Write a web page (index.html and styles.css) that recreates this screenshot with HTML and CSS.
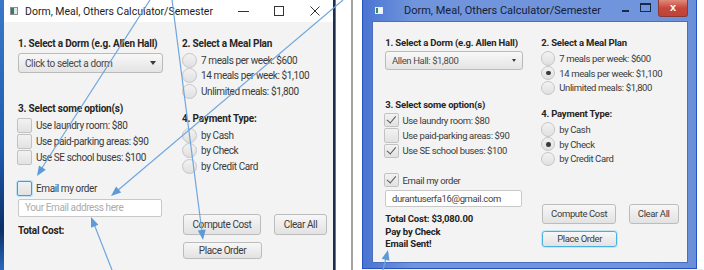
FILE: index.html
```html
<!DOCTYPE html>
<html lang="en">
<head>
    <meta charset="UTF-8">
    <meta name="viewport" content="width=device-width, initial-scale=1.0">
    <title>Dorm, Meal, Others Calculator/Semester</title>
    <link rel="stylesheet" href="styles.css">
</head>
<body>
    <div class="desk"></div>

    <!-- before: empty form -->
    <div class="win win10">
        <div class="titlebar">
            <span class="app-icon"></span>
            <span class="title">Dorm, Meal, Others Calculator/Semester</span>
            <span class="caption">
                <span class="cap-btn"><svg width="11" height="11" viewBox="0 0 11 11"><path d="M0 5.5h11" stroke="#333" stroke-width="1"/></svg></span>
                <span class="cap-btn"><svg width="10" height="10" viewBox="0 0 10 10"><rect x=".5" y=".5" width="9" height="9" fill="none" stroke="#333"/></svg></span>
                <span class="cap-btn"><svg width="10" height="10" viewBox="0 0 10 10"><path d="M.5 .5l9 9M9.5 .5l-9 9" stroke="#333" stroke-width="1"/></svg></span>
            </span>
        </div>
        <div class="pane">
            <div class="col">
                <div class="head">1. Select a Dorm (e.g. Allen Hall)</div>
                <div class="combo"><span class="prompt">Click to select a dorm</span><i class="caret"></i></div>
                <div class="head gap-options">3. Select some option(s)</div>
                <div class="check"><span class="box"></span>Use laundry room: $80</div>
                <div class="check"><span class="box"></span>Use paid-parking areas: $90</div>
                <div class="check"><span class="box"></span>Use SE school buses: $100</div>
                <div class="check email"><span class="box focused"></span>Email my order</div>
                <div class="field empty">Your Email address here</div>
                <div class="result">Total Cost:</div>
            </div>
            <div class="col">
                <div class="head">2. Select a Meal Plan</div>
                <div class="radio"><span class="ring"></span>7 meals per week: $600</div>
                <div class="radio"><span class="ring"></span>14 meals per week: $1,100</div>
                <div class="radio"><span class="ring"></span>Unlimited meals: $1,800</div>
                <div class="head gap-pay">4. Payment Type:</div>
                <div class="radio"><span class="ring"></span>by Cash</div>
                <div class="radio"><span class="ring"></span>by Check</div>
                <div class="radio"><span class="ring"></span>by Credit Card</div>
                <div class="actions">
                    <div class="btn compute">Compute Cost</div>
                    <div class="btn clear">Clear All</div>
                </div>
                <div class="btn place">Place Order</div>
            </div>
        </div>
    </div>

    <div class="between"></div>

    <!-- after: filled form -->
    <div class="win win7">
        <div class="titlebar">
            <span class="app-icon"></span>
            <span class="title">Dorm, Meal, Others Calculator/Semester</span>
            <span class="caption">
                <span class="cap-min"></span>
                <span class="cap-max"></span>
                <span class="cap-close">x</span>
            </span>
        </div>
        <div class="pane">
            <div class="col">
                <div class="head">1. Select a Dorm (e.g. Allen Hall)</div>
                <div class="combo"><span>Allen Hall: $1,800</span><i class="caret"></i></div>
                <div class="head gap-options">3. Select some option(s)</div>
                <div class="check"><span class="box on"></span>Use laundry room: $80</div>
                <div class="check"><span class="box"></span>Use paid-parking areas: $90</div>
                <div class="check"><span class="box on"></span>Use SE school buses: $100</div>
                <div class="check email"><span class="box on"></span>Email my order</div>
                <div class="field">durantuserfa16@gmail.com</div>
                <div class="result">Total Cost: $3,080.00<br>Pay by Check<br>Email Sent!</div>
            </div>
            <div class="col">
                <div class="head">2. Select a Meal Plan</div>
                <div class="radio"><span class="ring"></span>7 meals per week: $600</div>
                <div class="radio"><span class="ring on"></span>14 meals per week: $1,100</div>
                <div class="radio"><span class="ring"></span>Unlimited meals: $1,800</div>
                <div class="head gap-pay">4. Payment Type:</div>
                <div class="radio"><span class="ring"></span>by Cash</div>
                <div class="radio"><span class="ring on"></span>by Check</div>
                <div class="radio"><span class="ring"></span>by Credit Card</div>
                <div class="actions">
                    <div class="btn compute">Compute Cost</div>
                    <div class="btn clear">Clear All</div>
                </div>
                <div class="btn place focused">Place Order</div>
            </div>
        </div>
    </div>

    <div class="tail"></div>

    <!-- annotation arrows drawn over both shots -->
    <svg class="notes" width="704" height="270" viewBox="0 0 704 270">
        <g stroke="#6ea6de" stroke-width="1.2" fill="none">
            <path d="M150 0L40 171"/>
            <path d="M172 0L202 232"/>
            <path d="M343 0L117 191"/>
            <path d="M112 270L94 224"/>
            <path d="M383 270L386 258"/>
        </g>
        <g fill="#5d9ad8">
            <polygon points="37,176 45.8,169.8 39,165.4"/>
            <polygon points="203,240 197.8,230.6 205.7,229.6"/>
            <polygon points="111,196 116.1,186.5 121.2,192.6"/>
            <polygon points="91,217 98.4,224.8 91,227.8"/>
            <polygon points="388,250 389.5,260.7 381.7,258.7"/>
        </g>
    </svg>
</body>
</html>
```

FILE: styles.css
```css
body{
    margin:0;
    width:704px;
    height:270px;
    position:relative;
    display:flex;
    overflow:hidden;
    background:#eef0fa;
    font-family:Roboto,"Liberation Sans",sans-serif;
    color:#3a3a3a;
}
/* desktop edge on the left */
.desk{
    width:4px;
    background:linear-gradient(#3a78c8,#1d5bb0 55%,#0b2f66 85%,#2a68bd);
}
.win{
    display:flex;
    flex-direction:column;
}
.title{
    white-space:nowrap;
}

/* ---- windows 10 frame ---- */
.win10{
    width:329px;
    background:#f3f3f3;
    box-shadow:inset 1px 0 #8aa6c6;
}
.win10 .titlebar{
    height:22px;
    display:flex;
    align-items:center;
    padding-left:6px;
    background:#fff;
    font-size:10.5px;
    color:#1c1c1c;
}
.app-icon{
    width:6px;
    height:6px;
    border:1px solid #8d8d8d;
    background:linear-gradient(90deg,#2d7f6c 50%,#dbe6ef 50%);
}
.win10 .title{
    margin-left:7px;
}
.win10 .caption{
    margin-left:auto;
    display:flex;
}
.cap-btn{
    width:36px;
    height:22px;
    display:flex;
    align-items:center;
    justify-content:center;
}

/* gap between the two shots */
.between{
    width:29px;
    background:linear-gradient(90deg,#1e2d4e 2px,#3d80d8 2px 3px,#fff 3px 18px,#a2a2a2 18px 20px,#fff 20px);
}

/* ---- windows 7 basic frame ---- */
.win7{
    width:335px;
    height:269px;
    box-sizing:border-box;
    padding:0 8px 5px 9px;
    border:1px solid #2554c0;
    border-top:0;
    background:linear-gradient(90deg,#4a74d2,#7095dc 15%,#7095dc 85%,#6a8fd9);
}
.tail{
    width:7px;
    height:269px;
    background:#fff;
}
.win7 .titlebar{
    height:21px;
    display:flex;
    align-items:center;
    padding-left:3px;
    font-size:11px;
    color:#15203a;
}
.win7 .app-icon{
    width:6px;
    height:5px;
    border-color:#e8eef8;
    background:linear-gradient(90deg,#2f8d5f 40%,#f4f6fa 40%);
}
.win7 .title{
    margin-left:21px;
}
.win7 .caption{
    margin-left:auto;
    align-self:flex-start;
    display:flex;
    align-items:flex-start;
}
.cap-min{
    width:7px;
    height:2px;
    margin-top:10px;
    background:#1c2a4a;
}
.cap-max{
    width:9px;
    height:6px;
    margin:3px 0 0 11px;
    border:1px solid #1c2a4a;
    border-top-width:2px;
}
.cap-close{
    width:30px;
    height:17px;
    margin-left:7px;
    border:1px solid #8a3a34;
    border-top:0;
    box-sizing:border-box;
    border-radius:0 0 3px 3px;
    background:linear-gradient(#e08a7e,#c7473b 50%,#c04236);
    color:#fff;
    font:bold 11px "Liberation Sans",sans-serif;
    text-align:center;
    line-height:14px;
}

/* ---- form pane ---- */
.pane{
    flex:1;
    display:grid;
    grid-template-columns:164px 1fr;
    align-content:start;
    padding:15px 0 0 14px;
    background:#f3f3f3;
    font-size:10px;
    letter-spacing:-.4px;
    white-space:nowrap;
}
.win7 .pane{
    zoom:.95;
    border:1px solid #4b6fbd;
    padding-left:13px;
}
.col{
    display:flex;
    flex-direction:column;
    align-items:flex-start;
}
.head{
    font-weight:bold;
    letter-spacing:-.2px;
    line-height:14px;
    color:#262626;
}
.gap-options{
    margin-top:29px;
}
.gap-pay{
    margin-top:13px;
}
.combo{
    width:145px;
    height:20px;
    margin-top:2px;
    padding:0 6px;
    box-sizing:border-box;
    display:flex;
    align-items:center;
    justify-content:space-between;
    border:1px solid #bababa;
    border-radius:3px;
    background:linear-gradient(#f8f8f8,#e4e4e4);
    color:#4a4a4a;
}
.caret{
    border:3px solid transparent;
    border-top:4px solid #3a3a3a;
    border-bottom:0;
}
.check,.radio{
    display:flex;
    align-items:center;
}
.check{
    height:16px;
}
.radio{
    height:15.5px;
}
.head+.check,.head+.radio{
    margin-top:1.5px;
}
.box{
    width:13px;
    height:13px;
    margin:0 4px 0 -1px;
    border:1px solid #c2c2c2;
    border-radius:2px;
    background:linear-gradient(#f2f2f2,#e2e2e2);
    position:relative;
}
.box.focused{
    border-color:#3aa2dc;
    box-shadow:0 0 0 1px #bfe2f5;
}
.box.on:after{
    content:"";
    position:absolute;
    left:4px;
    top:0;
    width:4px;
    height:8px;
    border:solid #555;
    border-width:0 2px 2px 0;
    transform:rotate(40deg);
}
.email{
    margin-top:15px;
}
.ring{
    width:13px;
    height:13px;
    margin-right:4px;
    border:1px solid #c6c6c6;
    border-radius:50%;
    background:linear-gradient(#f2f2f2,#e0e0e0);
    display:flex;
    align-items:center;
    justify-content:center;
}
.ring.on:after{
    content:"";
    width:5px;
    height:5px;
    border-radius:50%;
    background:#3a3a3a;
}
.field{
    width:144px;
    height:18px;
    margin-top:2px;
    padding-left:6px;
    box-sizing:border-box;
    border:1px solid #c8c8c8;
    border-radius:2px;
    background:#fff;
    line-height:16px;
    color:#444;
}
.field.empty{
    color:#ababab;
}
.result{
    margin-top:7px;
    font-weight:bold;
    letter-spacing:-.2px;
    line-height:13px;
    color:#222;
}
.actions{
    display:flex;
    gap:13px;
    margin:40px 0 0 1px;
}
.btn{
    height:21px;
    box-sizing:border-box;
    border:1px solid #bcbcbc;
    border-radius:3px;
    background:linear-gradient(#f7f7f7,#e2e2e2);
    text-align:center;
    line-height:19px;
    color:#3c3c3c;
}
.compute{
    width:78px;
}
.clear{
    width:53px;
}
.place{
    width:79px;
    height:17px;
    margin:7px 0 0 1px;
    line-height:15px;
}
.place.focused{
    border-color:#49aee0;
    box-shadow:0 0 0 1px #c6e6f6;
}

/* arrows */
.notes{
    position:absolute;
    left:0;
    top:0;
    pointer-events:none;
}
```
